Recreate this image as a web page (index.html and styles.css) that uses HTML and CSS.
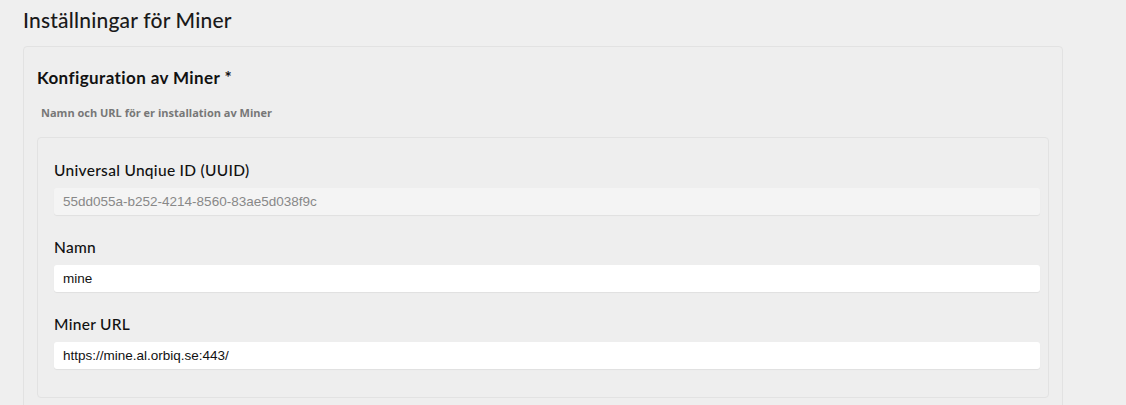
FILE: index.html
```html
<!DOCTYPE html>
<html lang="sv">
<head>
<meta charset="utf-8">
<title>Inställningar för Miner</title>
<link rel="stylesheet" href="styles.css">
</head>
<body>
<main class="page">
  <h1 class="page-title">Inställningar för Miner</h1>
  <section class="card">
    <h2 class="card-title">Konfiguration av Miner *</h2>
    <p class="card-desc">Namn och URL för er installation av Miner</p>
    <div class="panel">
      <div class="field">
        <label class="field-label" for="uuid">Universal Unqiue ID (UUID)</label>
        <input class="field-input is-disabled" id="uuid" type="text" value="55dd055a-b252-4214-8560-83ae5d038f9c" disabled>
      </div>
      <div class="field">
        <label class="field-label" for="namn">Namn</label>
        <input class="field-input" id="namn" type="text" value="mine">
      </div>
      <div class="field">
        <label class="field-label" for="url">Miner URL</label>
        <input class="field-input" id="url" type="text" value="https://mine.al.orbiq.se:443/">
      </div>
    </div>
  </section>
</main>
</body>
</html>
```
FILE: styles.css
```css
* { box-sizing: border-box; }
html, body { margin: 0; padding: 0; }
body {
  background: #efefef;
  font-family: "Lato", "Noto Sans", sans-serif;
  color: #111;
  overflow: hidden;
}
.page {
  width: 1040px;
  margin-left: 23px;
  padding-top: 9px;
}
.page-title {
  margin: 0 0 15px 0;
  font-size: 21px;
  font-weight: 500;
  line-height: 22px;
  color: #1a1a1a;
  letter-spacing: 0.2px;
}
.card {
  background: #eeeeee;
  border: 1px solid #e2e2e2;
  border-radius: 4px;
  padding: 21px 13px 30px 13px;
  min-height: 400px;
}
.card-title {
  margin: 0;
  font-size: 17px;
  font-weight: 700;
  line-height: 20px;
  color: #111;
  letter-spacing: 0.4px;
}
.card-desc {
  margin: 18px 0 17px 4px;
  font-family: "Open Sans", sans-serif;
  font-weight: 700;
  font-size: 11px;
  line-height: 14px;
  color: #777;
}
.panel {
  border: 1px solid #e2e2e2;
  border-radius: 4px;
  padding: 22px 8px 28px 16px;
  display: flex;
  flex-direction: column;
  gap: 22px;
}
.field {
  display: flex;
  flex-direction: column;
  gap: 8px;
}
.field-label {
  font-size: 15.5px;
  font-weight: 500;
  line-height: 20px;
  color: #111;
  letter-spacing: 0.3px;
}
.field-input {
  height: 27px;
  width: 100%;
  border: none;
  border-radius: 3px;
  background: #fff;
  box-shadow: 0 1px 1px rgba(0,0,0,0.06);
  padding: 0 9px;
  font-family: "Liberation Sans", Arial, sans-serif;
  font-size: 13.5px;
  color: #111;
  outline: none;
}
.field-input.is-disabled {
  background: #f4f4f4;
  color: #888;
}
```
